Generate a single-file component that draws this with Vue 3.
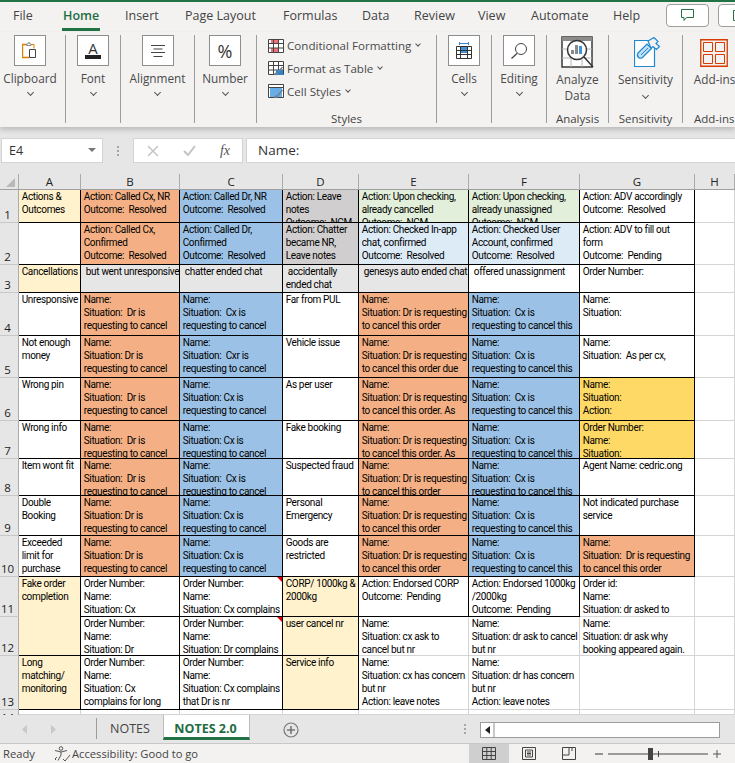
<script setup>
const tabs = ['File', 'Home', 'Insert', 'Page Layout', 'Formulas', 'Data', 'Review', 'View', 'Automate', 'Help']
const cols = ['A', 'B', 'C', 'D', 'E', 'F', 'G', 'H']

const nm = 'Name:\n'
const dr1 = nm + 'Situation: Dr is\nrequesting to cancel'
const dr2 = nm + 'Situation:  Dr is\nrequesting to cancel'
const cx1 = nm + 'Situation: Cx is\nrequesting to cancel'
const cx2 = nm + 'Situation:  Cx is\nrequesting to cancel'
const eo = nm + 'Situation: Dr is requesting\nto cancel this order'
const fb = nm + 'Situation:  Cx is\nrequesting to cancel this'

const c = (t, bg = '', k = 'kr kb', extra = '') => ({ t, cls: [bg, k, extra].join(' ') })
const g = (t = '') => c(t, '', '')

const rows = [
  [c('Actions &\nOutcomes', 'cream'), c('Action: Called Cx, NR\nOutcome:  Resolved', 'orange'), c('Action: Called Dr, NR\nOutcome:  Resolved', 'blue'), c('Action: Leave\nnotes\nOutcome:  NCM', 'grey'), c('Action: Upon checking,\nalready cancelled\nOutcome:  NCM', 'green'), c('Action: Upon checking,\nalready unassigned\nOutcome:  NCM', 'green'), c('Action: ADV accordingly\nOutcome:  Resolved')],
  [c(''), c('Action: Called Cx,\nConfirmed\nOutcome:  Resolved', 'orange'), c('Action: Called Dr,\nConfirmed\nOutcome:  Resolved', 'blue'), c('Action: Chatter\nbecame NR,\nLeave notes', 'grey'), c('Action: Checked In-app\nchat, confirmed\nOutcome:  Resolved', 'sky'), c('Action: Checked User\nAccount, confirmed\nOutcome:  Resolved', 'sky'), c('Action: ADV to fill out\nform\nOutcome:  Pending')],
  [c('Cancellations', 'cream'), c(' but went unresponsive', 'pale'), c(' chatter ended chat', 'pale'), c(' accidentally\nended chat', 'pale'), c(' genesys auto ended chat', 'pale'), c(' offered unassignment'), c('Order Number:')],
  [c('Unresponsive'), c(dr2, 'orange'), c(cx2, 'blue'), c('Far from PUL'), c(eo, 'orange'), c(fb, 'blue'), c('Name:\nSituation:')],
  [c('Not enough\nmoney'), c(dr1, 'orange'), c(nm + 'Situation:  Cxr is\nrequesting to cancel', 'blue'), c('Vehicle issue'), c(nm + 'Situation: Dr is requesting\nto cancel this order due', 'orange'), c(fb, 'blue'), c('Name:\nSituation:  As per cx,')],
  [c('Wrong pin'), c(dr2, 'orange'), c(cx1, 'blue'), c('As per user'), c(nm + 'Situation: Dr is requesting\nto cancel this order. As', 'orange'), c(fb, 'blue'), c('Name:\nSituation:\nAction:', 'yellow')],
  [c('Wrong info'), c(dr2, 'orange'), c(cx1, 'blue'), c('Fake booking'), c(nm + 'Situation: Dr is requesting\nto cancel this order. As', 'orange'), c(fb, 'blue'), c('Order Number:\nName:\nSituation:', 'yellow')],
  [c('Item wont fit'), c(dr2, 'orange'), c(cx2, 'blue'), c('Suspected fraud'), c(eo, 'orange'), c(fb, 'blue'), c('Agent Name: cedric.ong')],
  [c('Double\nBooking'), c(dr1, 'orange'), c(cx1, 'blue'), c('Personal\nEmergency'), c(eo, 'orange'), c(fb, 'blue'), c('Not indicated purchase\nservice')],
  [c('Exceeded\nlimit for\npurchase'), c(dr1, 'orange'), c(cx1, 'blue'), c('Goods are\nrestricted'), c(eo, 'orange'), c(fb, 'blue'), c('Name:\nSituation:  Dr is requesting\nto cancel this order', 'orange')],
  [c('Fake order\ncompletion', 'cream', 'kr kb', 'span2'), c('Order Number:\nName:\nSituation: Cx'), c('Order Number:\nName:\nSituation: Cx complains', '', 'kr kb', 'note'), c('CORP/ 1000kg &\n2000kg', 'cream'), c('Action: Endorsed CORP\nOutcome:  Pending'), c('Action: Endorsed 1000kg\n/2000kg\nOutcome:  Pending'), g('Order id:\nName:\nSituation: dr asked to')],
  [c('Order Number:\nName:\nSituation: Dr'), c('Order Number:\nName:\nSituation: Dr complains', '', 'kr kb', 'note'), c('user cancel nr', 'cream'), g('Name:\nSituation: cx ask to\ncancel but nr'), g('Name:\nSituation: dr ask to cancel\nbut nr'), g('Name:\nSituation: dr ask why\nbooking appeared again.')],
  [c('Long\nmatching/\nmonitoring', 'cream'), c('Order Number:\nName:\nSituation: Cx\ncomplains for long'), c('Order Number:\nName:\nSituation: Cx complains\nthat Dr is nr'), c('Service info', 'cream'), g('Name:\nSituation: cx has concern\nbut nr\nAction: leave notes'), g('Name:\nSituation: dr has concern\nbut nr\nAction: leave notes'), g()],
  [g(), g(), g(), g(), g(), g(), g()]
]
</script>

<template>
  <div class="app">
    <header class="tabbar">
      <nav class="tabs">
        <span v-for="t in tabs" :key="t" class="tab" :class="{ on: t === 'Home' }">{{ t }}</span>
      </nav>
      <div class="topbtn">
        <svg width="14" height="13" viewBox="0 0 14 13"><path d="M.5.5h12v8H5.5L3 11.5v-3H.5z" fill="none" stroke="#217346"/></svg>
      </div>
      <div class="topbtn second">
        <svg width="14" height="13" viewBox="0 0 14 13"><path d="M.5 1.5h11v10H.5z" fill="none" stroke="#217346"/></svg>
      </div>
    </header>

    <section class="ribbon">
      <div class="grp g1">
        <div class="box">
          <svg width="16" height="18" viewBox="0 0 16 18"><path d="M4 2.500H.5V15.500H7" fill="none" stroke="#e07b00" stroke-width="1.400"/><path d="M9 2.500h3v4" fill="none" stroke="#e07b00"/><path d="M4.500 3.500V2H6L6.500.5h1L8 2h1v1.500z" fill="#fff" stroke="#8a8a8a"/><path d="M7.500 7.500h6v8h-6z" fill="#fff" stroke="#444"/></svg>
        </div>
        <span class="lbl">Clipboard</span><i class="chev"></i>
      </div>
      <div class="grp g2">
        <div class="box">
          <svg width="18" height="20" viewBox="0 0 18 20"><text x="9" y="13" text-anchor="middle" font-family="'Open Sans',sans-serif" font-size="15" fill="#333">A</text><path d="M1 14h16v4H1z" fill="#222"/></svg>
        </div>
        <span class="lbl">Font</span><i class="chev"></i>
      </div>
      <div class="grp g3">
        <div class="box">
          <svg width="16" height="16" viewBox="0 0 16 16"><path d="M1 2.500h14M3.500 6h9M1 9.500h14M3.500 13.500h9" stroke="#444" fill="none"/></svg>
        </div>
        <span class="lbl">Alignment</span><i class="chev"></i>
      </div>
      <div class="grp g4">
        <div class="box"><span class="pct">%</span></div>
        <span class="lbl">Number</span><i class="chev"></i>
      </div>
      <div class="grp g5">
        <div class="styles">
          <div class="sty">
            <svg width="16" height="14" viewBox="0 0 16 14"><path d="M.5.500h15v13H.500z" fill="#fff"/><path d="M3 1h7v3H3zM3 9h7v4H3z" fill="#f0707a"/><path d="M.5.500h15v13H.500zM.5 4.500h15M.5 9h15M5.500.500v13M10.500.500v13" fill="none" stroke="#444"/></svg>
            <span>Conditional Formatting</span><i class="chev sm"></i>
          </div>
          <div class="sty">
            <svg width="16" height="15" viewBox="0 0 16 15"><path d="M.5.500h15v13H.500zM.5 4.500h15M.5 9h15M5.500.500v13M10.500.500v13" fill="#fff" stroke="#444"/><path d="M8 9h7v5H8z" fill="#2e86d0"/><path d="M6 13.500c1-2 2-2.500 3-2l5-6 1 1-5 6c.500 1.500-2 2.500-4 1z" fill="#6d7f96"/></svg>
            <span>Format as Table</span><i class="chev sm"></i>
          </div>
          <div class="sty">
            <svg width="16" height="15" viewBox="0 0 16 15"><path d="M.5.500h15v13H.500z" fill="#fff" stroke="#444"/><path d="M2 3h12v10H2z" fill="#68aee6"/><path d="M.5 3.500h15" stroke="#444"/><path d="M6 13.500c1-2 2-2.500 3-2l5-6 1 1-5 6c.500 1.500-2 2.500-4 1z" fill="#6d7f96"/></svg>
            <span>Cell Styles</span><i class="chev sm"></i>
          </div>
        </div>
        <span class="gname">Styles</span>
      </div>
      <div class="grp g6">
        <div class="box">
          <svg width="18" height="18" viewBox="0 0 18 18"><path d="M4.500 1.500h9M4.500 0v3M13.500 0v3" stroke="#2e86d0" fill="none"/><path d="M5 5h8v6H5z" fill="#3f93d8"/><path d="M1.500 4.500h15v12h-15zM1.500 8.500h15M1.500 12.500h15M5.500 4.500v12M12.500 4.500v12" fill="none" stroke="#333"/></svg>
        </div>
        <span class="lbl">Cells</span><i class="chev"></i>
      </div>
      <div class="grp g7">
        <div class="box">
          <svg width="18" height="18" viewBox="0 0 18 18"><circle cx="11" cy="7" r="5.500" fill="none" stroke="#444"/><path d="M7 11.500 1.500 16.500" stroke="#444" stroke-width="1.300"/></svg>
        </div>
        <span class="lbl">Editing</span><i class="chev"></i>
      </div>
      <div class="grp g8">
        <svg class="big" width="33" height="33" viewBox="0 0 33 33"><path d="M1 1h30v30H1z" fill="#fff" stroke="#3a3a3a" stroke-width="1.500"/><path d="M1 1h30v4H1z" fill="#8b8b8b"/><path d="M1 13h30M1 22h30M10 5v26M21 5v26" stroke="#b5b5b5"/><circle cx="16" cy="14" r="9.500" fill="#fff" stroke="#333" stroke-width="1.500"/><path d="M10 18v-4h3v4z" fill="#8a8a8a"/><path d="M14 18V9h3v9z" fill="#8a8a8a"/><path d="M18 18v-8h3v8z" fill="#3f93d8"/><path d="m23 21 9 10" stroke="#333" stroke-width="1.500"/></svg>
        <span class="lbl tight">Analyze<br />Data</span>
        <span class="gname">Analysis</span>
      </div>
      <div class="grp g9">
        <svg class="big" width="28" height="30" viewBox="0 0 28 30"><path d="M.5 3.500h20v26H.500z" fill="#fff" stroke="#1e88d2" stroke-width="1.200"/><g fill="#f3f2f1" stroke="#1e88d2" stroke-width="1.200"><path d="M14 4 20 .5l4 4-2 2 3.500 3-3 3-3.500-3-2 2z"/><path d="M4 16 13 7l4.500 4.500-9 9q-2 1.500-4 0t-.500-4.500z" fill="#bfe0f5"/></g><path d="m7 18 7-7M9 20l7-7" stroke="#1e88d2"/></svg>
        <span class="lbl">Sensitivity</span><i class="chev"></i>
        <span class="gname">Sensitivity</span>
      </div>
      <div class="grp g10">
        <svg class="big addin" width="28" height="28" viewBox="0 0 28 28"><g fill="none" stroke="#d83b01"><path d="M.75.750h26.500v26.500H.750z" stroke-width="1.300"/><path d="M3.500 3.500h9v9h-9zM15.500 3.500h9v9h-9zM3.500 15.500h9v9h-9zM15.500 15.500h9v9h-9z"/></g></svg>
        <span class="lbl">Add-ins</span>
        <span class="gname">Add-ins</span>
      </div>
    </section>

    <section class="fbar">
      <div class="namebox"><span>E4</span><i class="tri"></i></div>
      <div class="dots"><b></b><b></b><b></b></div>
      <div class="fbtns">
        <svg width="12" height="12" viewBox="0 0 12 12"><path d="m1 1 10 10M11 1 1 11" stroke="#c4c4c4" stroke-width="1.500"/></svg>
        <svg width="13" height="11" viewBox="0 0 13 11"><path d="m1 6 4 4 7-9" stroke="#c4c4c4" stroke-width="2" fill="none"/></svg>
        <span class="fx">fx</span>
      </div>
      <div class="finput">Name:</div>
    </section>

    <section class="sheet">
      <div class="corner"><i></i></div>
      <div v-for="h in cols" :key="h" class="colh">{{ h }}</div>
      <template v-for="(row, ri) in rows" :key="ri">
        <div class="rowh" :class="{ sliver: ri === 13 }">{{ ri + 1 }}</div>
        <div v-for="(cell, ci) in row" :key="ci" class="cell" :class="cell.cls">{{ cell.t }}</div>
        <div class="cell"></div>
      </template>
    </section>

    <section class="sheettabs">
      <div class="navs">
        <svg width="6" height="9" viewBox="0 0 6 9"><path d="M5 0v9L0 4.500z" fill="#c8c8c8"/></svg>
        <svg width="6" height="9" viewBox="0 0 6 9"><path d="M1 0v9l5-4.500z" fill="#c8c8c8"/></svg>
      </div>
      <div class="stab">NOTES</div>
      <div class="stab active">NOTES 2.0</div>
      <div class="addwrap">
        <svg width="16" height="16" viewBox="0 0 16 16"><circle cx="8" cy="8" r="7" fill="none" stroke="#777" stroke-width="1.200"/><path d="M8 4v8M4 8h8" stroke="#777" stroke-width="1.600"/></svg>
      </div>
      <div class="tdots"><b></b><b></b><b></b></div>
      <div class="hscroll">
        <div class="harrow"><svg width="5" height="8" viewBox="0 0 5 8"><path d="M5 0v8L0 4z" fill="#222"/></svg></div>
      </div>
    </section>

    <footer class="status">
      <span class="ready">Ready</span>
      <svg class="acc" width="17" height="16" viewBox="0 0 17 16"><circle cx="7" cy="2.500" r="1.800" fill="none" stroke="#555"/><path d="M1 4.500 7 6l6-1.500M7 6v3M7 9l-3 5.500M3 11l-2 2 1 1M9 13l2 2 5-6" fill="none" stroke="#555"/></svg>
      <span class="acct">Accessibility: Good to go</span>
      <div class="views">
        <div class="vbtn active"><svg width="14" height="13" viewBox="0 0 14 13"><path d="M.5.500h13v12H.500zM.5 4.500h13M.5 8.500h13M4.800.500v12M9.200.500v12" fill="none" stroke="#444"/></svg></div>
        <div class="vbtn"><svg width="14" height="13" viewBox="0 0 14 13"><path d="M.5.500h13v12H.500z" fill="none" stroke="#444"/><path d="M3.500 3h7v7h-7zM5 5h4M5 6.500h4M5 8h4" fill="none" stroke="#444"/></svg></div>
        <div class="vbtn"><svg width="14" height="13" viewBox="0 0 14 13"><path d="M.5.500h13v12H.500zM.5 8h6.500V.500M10 .500V4" fill="none" stroke="#444"/></svg></div>
      </div>
      <div class="zoom">
        <svg width="126" height="14" viewBox="0 0 126 14"><path d="M0 7h8" stroke="#555" stroke-width="1.200"/><path d="M13 7h100" stroke="#444"/><path d="M53 1h5v12h-5z" fill="#444"/><path d="M63.500 4v6" stroke="#444"/><path d="M118 7h8M122 3v8" stroke="#555"/></svg>
      </div>
    </footer>
  </div>
</template>

<style>
html, body { margin: 0; padding: 0; background: #f3f2f1; }
</style>

<style scoped>
.app {
  width: 735px; height: 763px; overflow: hidden; display: flex; flex-direction: column;
  font-family: "Open Sans", "Noto Sans", sans-serif; color: #444; background: #f3f2f1;
}
i, b { display: block; }
.tabbar {
  height: 30px; flex: none; border-top: 2px solid #217346; display: flex; background: #f3f2f1; overflow: hidden;
}
.tabs {
  display: grid; padding-left: 13px; width: 666px; box-sizing: border-box; flex: none;
  grid-template-columns: 50px 62px 60px 98px 79px 52px 64px 53px 82px 40px;
  font-size: 12.5px; line-height: 28px;
}
.tab { white-space: nowrap; position: relative; height: 28px; }
.tab.on { color: #1f6e43; font-weight: 600; }
.tab.on::after { content: ""; position: absolute; left: -1px; bottom: -1px; width: 38px; height: 3px; background: #217346; }
.topbtn {
  width: 43px; height: 23px; margin-top: 2px; flex: none; box-sizing: border-box; border: 1px solid #9e9e9e;
  border-radius: 4px; background: #fff; display: flex; align-items: center; justify-content: center;
}
.topbtn.second { margin-left: 9px; }
.ribbon {
  height: 95px; flex: none; display: flex; background: #f3f2f1; position: relative; z-index: 2;
  box-shadow: 0 3px 5px rgba(0, 0, 0, .18);
}
.grp {
  flex: none; box-sizing: border-box; height: 88px; margin-top: 3px; padding-top: 0;
  display: flex; flex-direction: column; align-items: center; border-right: 1px solid #9c9c9c; position: relative;
}
.g1 { width: 66px; padding-right: 5px; }
.g2 { width: 55px; }
.g3 { width: 74px; }
.g4 { width: 62px; padding-right: 1px; }
.g5 { width: 180px; }
.g6 { width: 55px; }
.g7 { width: 55px; }
.g8 { width: 62px; }
.g9 { width: 74px; }
.g10 { width: 53px; border-right: 0; overflow: visible; }
.box {
  width: 32px; height: 31px; box-sizing: border-box; border: 1px solid #8e8e8e; background: #fff; flex: none;
  display: flex; align-items: center; justify-content: center;
}
.lbl { font-size: 11.8px; line-height: 17px; margin-top: 4px; white-space: nowrap; color: #4a4a4a; }
.lbl.tight { line-height: 16px; text-align: center; margin-top: 2px; }
.chev {
  width: 4px; height: 4px; border-right: 1px solid #555; border-bottom: 1px solid #555;
  transform: rotate(45deg); margin-top: 3px;
}
.chev.sm { width: 3px; height: 3px; margin: -3px 0 0 5px; }
.big { margin-top: 2px; flex: none; }
.g8 .big { margin-top: 1px; }
.g9 .big { margin-top: 2px; margin-left: 5px; }
.g9 .lbl { margin-top: 4px; }
.g10 .big { margin-top: 4px; margin-left: 8px; }
.g10 .lbl { margin-top: 4px; margin-left: 10px; }
.g9 .chev { margin-top: 5px; }
.gname { position: absolute; bottom: -4px; left: 0; right: 0; text-align: center; font-size: 11.5px; line-height: 16px; white-space: nowrap; }
.g10 .gname { left: 11px; right: auto; }
.pct { font-size: 18px; color: #333; line-height: 1; }
.styles { align-self: flex-start; padding: 2px 0 0 11px; display: flex; flex-direction: column; gap: 6px; }
.sty { display: flex; align-items: center; height: 17px; font-size: 11.6px; white-space: nowrap; color: #4a4a4a; }
.sty svg { margin-right: 3px; flex: none; }
.fbar {
  height: 47px; flex: none; box-sizing: border-box; background: #e6e6e6; padding: 11px 0 11px 1px;
  display: flex; align-items: stretch;
}
.namebox {
  width: 102px; box-sizing: border-box; background: #fff; border: 1px solid #d4d4d4; display: flex;
  align-items: center; justify-content: space-between; padding: 0 5px 0 7px; font-size: 12.5px; color: #333;
}
.tri { width: 0; height: 0; border: 4px solid transparent; border-top: 4px solid #777; border-bottom: 0; margin-right: 1px; margin-top: -2px; }
.dots { width: 30px; flex: none; display: flex; flex-direction: column; align-items: center; justify-content: center; gap: 2px; }
.dots b, .tdots b { width: 2px; height: 2px; background: #a6a6a6; }
.fbtns {
  width: 110px; box-sizing: border-box; flex: none; background: #fff; border: 1px solid #d4d4d4; display: grid;
  grid-template-columns: 36px 36px 36px; justify-items: center; align-items: center; padding-left: 1px;
}
.fx { font-family: "Liberation Serif", serif; font-style: italic; font-size: 14px; color: #555; }
.finput {
  margin-left: 3px; flex: 1; background: #fff; border: 1px solid #d4d4d4; border-right: 0; padding-left: 11px;
  font-size: 13.5px; line-height: 23px; color: #333;
}
.sheet {
  height: 541px; flex: none; display: grid; overflow: hidden; background: #fff;
  grid-template-columns: 19px 62px 99px 103px 76px 110px 111px 115px 40px;
  grid-template-rows: 16px 33px 42px 28px 43px 42px 43px 38px 37px 40px 41px 40px 39px 54px 5px;
  font-family: Roboto, "Liberation Sans", Arial, sans-serif; font-size: 10px; letter-spacing: -.33px; line-height: 13px; color: #000;
}
.corner, .colh, .rowh { background: #e6e6e6; box-sizing: border-box; font-family: "Open Sans", sans-serif; color: #222; letter-spacing: 0; }
.corner { position: relative; border-right: 1px solid #ababab; border-bottom: 1px solid #9f9f9f; }
.corner i { position: absolute; right: 3px; bottom: 2px; width: 0; height: 0; border-left: 9px solid transparent; border-bottom: 9px solid #b8b8b8; }
.colh {
  text-align: center; font-size: 11.5px; line-height: 15px; border-bottom: 1px solid #9f9f9f; border-right: 1px solid #ababab;
}
.rowh {
  display: flex; align-items: flex-end; justify-content: center; font-size: 11.5px; line-height: 15px;
  border-right: 1px solid #ababab; border-bottom: 1px solid #c8c8c8; padding-right: 3px; overflow: hidden;
}
.rowh.sliver { align-items: flex-start; border-bottom: 0; }
.cell {
  box-sizing: border-box; overflow: hidden; white-space: pre; padding-left: 2.7px; position: relative; background: #fff;
  border-right: 1px solid #d4d4d4; border-bottom: 1px solid #d4d4d4;
}
.kr { border-right-color: #000; }
.kb { border-bottom-color: #000; }
.span2 { grid-row: span 2; }
.note::after {
  content: ""; position: absolute; right: 0; top: 0; width: 0; height: 0;
  border-top: 5px solid #e00000; border-left: 5px solid transparent;
}
.cream { background: #fff2cc; }
.orange { background: #f4b084; }
.blue { background: #9bc2e6; }
.grey { background: #d0cece; }
.pale { background: #e7e6e6; }
.green { background: #e2efda; }
.sky { background: #ddebf7; }
.yellow { background: #ffd966; }
.sheettabs {
  height: 28px; flex: none; background: #e6e6e6; display: flex; align-items: flex-start; border-bottom: 1px solid #c8c8c8;
}
.navs { width: 96px; height: 28px; flex: none; box-sizing: border-box; padding: 0 40px 0 22px; display: flex; align-items: center; justify-content: space-between; }
.stab {
  height: 21px; margin-top: 3px; width: 67px; flex: none; box-sizing: border-box; border-left: 1px solid #9c9c9c; text-align: center;
  font-size: 12.5px; line-height: 21px; color: #444;
}
.stab.active {
  width: 87px; height: 25px; margin-top: 0; background: #fff; border-left: 1px solid #bbb; border-right: 1px solid #bbb; border-bottom: 3px solid #217346;
  color: #1e6c41; font-weight: 700; line-height: 27px; padding-right: 2px;
}
.addwrap { width: 84px; flex: none; height: 28px; box-sizing: border-box; padding: 6px 0 0 33px; }
.tdots { width: 2px; margin-left: 130px; height: 28px; flex: none; display: flex; flex-direction: column; justify-content: center; gap: 2px; }
.hscroll {
  width: 240px; height: 16px; margin-top: 7px; margin-left: 14px; flex: none; box-sizing: border-box; background: #fff;
  border: 1px solid #9c9c9c; display: flex;
}
.harrow { width: 14px; box-sizing: border-box; border-right: 2px solid #c8c8c8; display: flex; align-items: center; justify-content: center; }
.status {
  height: 19px; flex: none; display: flex; align-items: center; font-size: 11.2px; color: #444; background: #f3f2f1; padding-left: 3px; position: relative;
}
.ready { width: 51px; flex: none; }
.acc { flex: none; margin-right: 1px; }
.acct { width: 397px; flex: none; white-space: nowrap; }
.views { display: flex; height: 19px; flex: none; }
.vbtn { width: 40px; display: flex; align-items: center; justify-content: center; }
.vbtn.active { background: #d0cfcf; }
.zoom { margin-left: 6px; flex: none; display: flex; }
</style>
